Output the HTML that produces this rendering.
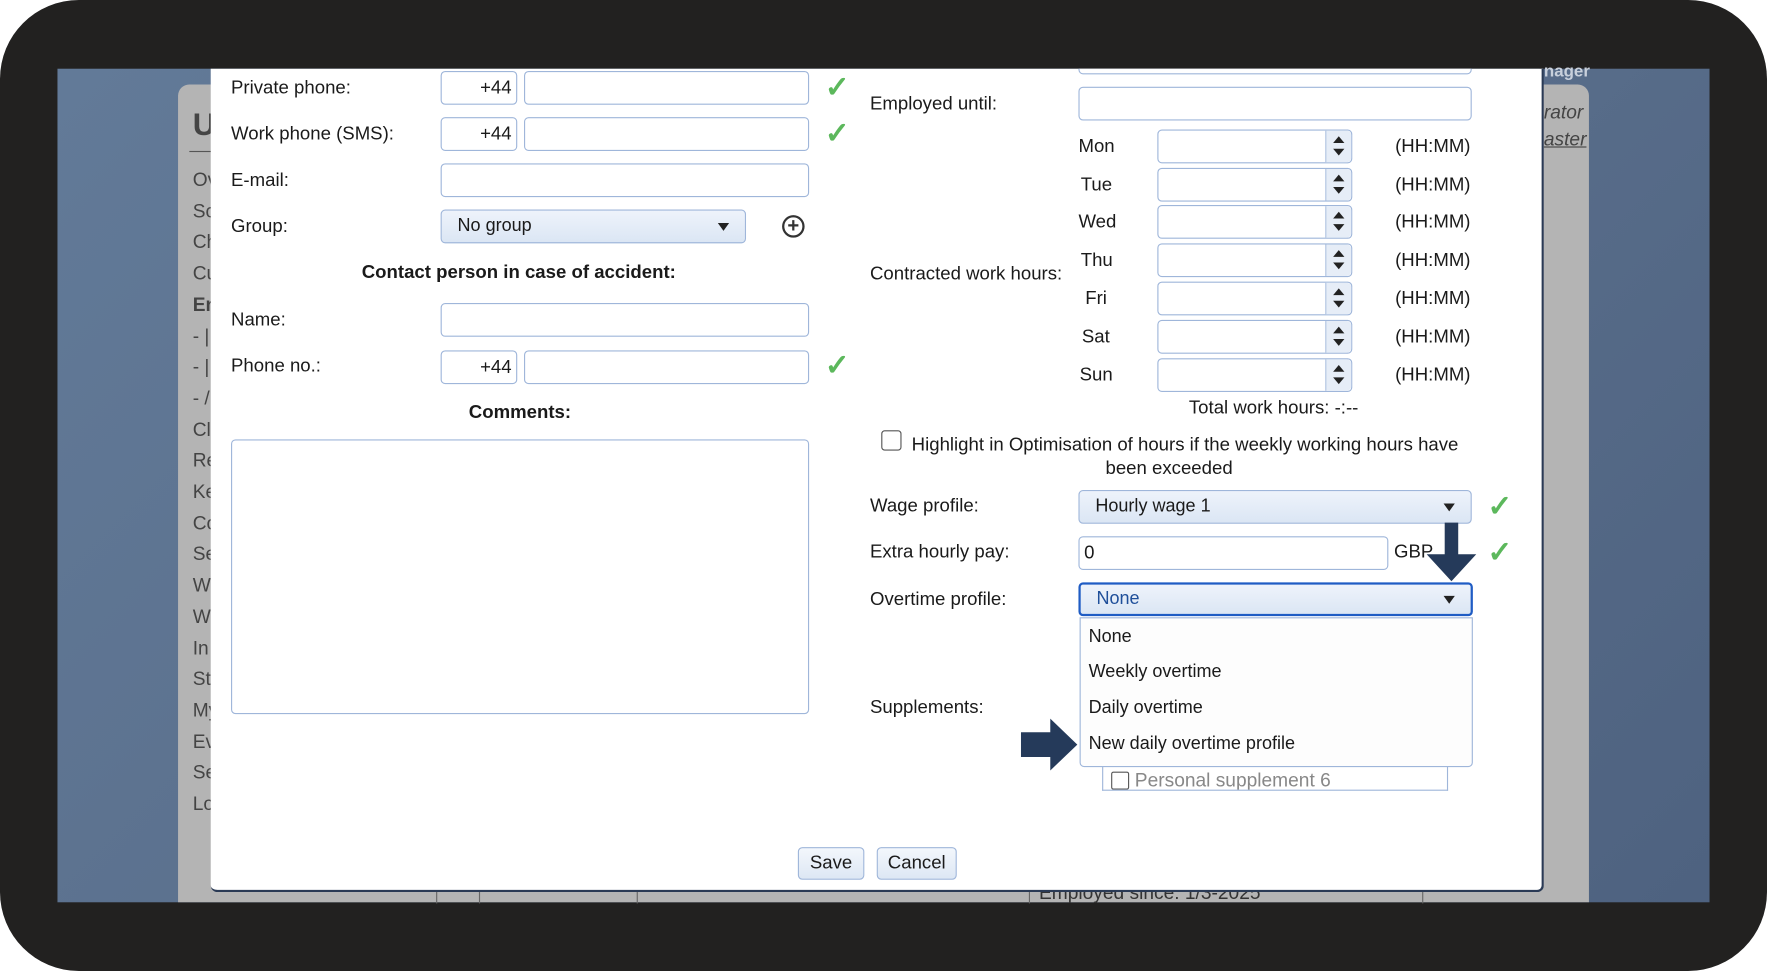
<!DOCTYPE html>
<html><head><meta charset="utf-8"><style>
*{box-sizing:border-box;margin:0;padding:0}
html,body{width:1767px;height:971px;overflow:hidden;background:#fff}
#w{position:absolute;left:0;top:0;width:1568px;height:862px;transform:scale(1.12691,1.12645);transform-origin:0 0;font-family:"Liberation Sans",sans-serif;color:#1a1a1a}
.a{position:absolute;white-space:nowrap}
.frame{left:0;top:0;width:1568px;height:862px;background:#222120;border-radius:70px}
.screen{left:51px;top:61px;width:1466px;height:740px;background:linear-gradient(135deg,#627a98 0%,#5a6f8c 50%,#4e6280 100%);overflow:hidden}
.panel{left:158px;top:75px;width:1252px;height:726px;background:#b4b4b4;border-radius:10px 10px 0 0}
.side{font-size:17px;color:#444}
.modal{left:187px;top:61px;width:1183px;height:731px;background:#fff;border-bottom:2px solid #2a3a55;border-right:2px solid #2a3a55;border-radius:0 0 6px 6px}
.l{font-size:16.5px}
.in{position:absolute;height:30px;border:1px solid #9fb6da;border-radius:4px;background:#fff}
.cc{font-size:16.5px;text-align:right;padding-right:4px;line-height:28px}
.sel{position:absolute;height:30px;border:1px solid #9fb6da;border-radius:4px;background:linear-gradient(#eef3fb,#dbe6f4);font-size:16px;line-height:28px;padding-left:14px}
.tri{position:absolute;right:14px;top:11px;width:0;height:0;border-left:5px solid transparent;border-right:5px solid transparent;border-top:7px solid #222}
.chk{position:absolute;font-size:26px;color:#5cb85c;line-height:1;font-weight:bold}
.sp{position:absolute;right:0;top:0;width:23px;height:28px;border-left:1px solid #9fb6da;background:#e6edf7;border-radius:0 4px 4px 0}
.sp:before{content:"";position:absolute;left:6px;top:5px;border-left:5px solid transparent;border-right:5px solid transparent;border-bottom:6px solid #222}
.sp:after{content:"";position:absolute;left:6px;top:16px;border-left:5px solid transparent;border-right:5px solid transparent;border-top:6px solid #222}
.btn{position:absolute;height:29px;border:1px solid #9fb6da;border-radius:4px;background:linear-gradient(#f3f7fc,#dde7f4);font-size:16.5px;line-height:27px;text-align:center}
.dd{font-size:16px}
</style></head><body><div id="w">
<div class="a frame"></div>
<div class="a screen"></div>
<div class="a panel"></div>
<div class="a" style="left:1370px;top:55px;font-size:15px;font-weight:bold;color:#c8d0dc">nager</div>
<div class="a" style="left:1370px;top:90px;font-size:17px;font-style:italic;color:#444">rator</div>
<div class="a" style="left:1370px;top:114px;font-size:17px;font-style:italic;color:#444;text-decoration:underline">aster</div>
<div class="a" style="left:171px;top:95px;font-size:28px;font-weight:bold;color:#444">U</div>
<div class="a" style="left:168px;top:134px;width:20px;border-top:1px solid #555"></div>
<div class="a side" style="left:171px;top:146px;line-height:27.7px">Ov<br>Sc<br>Ch<br>Cu<br><b>En</b><br>- |<br>- |<br>- /<br>Cl<br>Re<br>Ke<br>Co<br>Se<br>W<br>W<br>In<br>St<br>My<br>Ev<br>Se<br>Lo</div>
<div class="a" style="left:922px;top:783px;font-size:17px;color:#333">Employed since: 1/3-2025</div>
<div class="a" style="left:387px;top:790px;width:1px;height:12px;background:#666"></div>
<div class="a" style="left:425px;top:790px;width:1px;height:12px;background:#666"></div>
<div class="a" style="left:565px;top:790px;width:1px;height:12px;background:#666"></div>
<div class="a" style="left:913px;top:790px;width:1px;height:12px;background:#666"></div>
<div class="a" style="left:1262px;top:790px;width:1px;height:12px;background:#666"></div>

<div class="a modal"></div>

<!-- left column -->
<div class="a l" style="left:205px;top:69px">Private phone:</div>
<div class="in cc" style="left:391px;top:63px;width:68px">+44</div>
<div class="in" style="left:465px;top:63px;width:253px"></div>
<div class="chk" style="left:732px;top:64px">✓</div>
<div class="a l" style="left:205px;top:110px">Work phone (SMS):</div>
<div class="in cc" style="left:391px;top:104px;width:68px">+44</div>
<div class="in" style="left:465px;top:104px;width:253px"></div>
<div class="chk" style="left:732px;top:105px">✓</div>
<div class="a l" style="left:205px;top:151px">E-mail:</div>
<div class="in" style="left:391px;top:145px;width:327px"></div>
<div class="a l" style="left:205px;top:192px">Group:</div>
<div class="sel" style="left:391px;top:186px;width:271px">No group<span class="tri"></span></div>
<div class="a" style="left:694px;top:191px;width:20px;height:20px;border:2px solid #333;border-radius:50%;font-size:18px;font-weight:bold;line-height:15px;text-align:center;color:#333">+</div>
<div class="a l" style="left:321px;top:233px;font-weight:bold">Contact person in case of accident:</div>
<div class="a l" style="left:205px;top:275px">Name:</div>
<div class="in" style="left:391px;top:269px;width:327px"></div>
<div class="a l" style="left:205px;top:316px">Phone no.:</div>
<div class="in cc" style="left:391px;top:311px;width:68px">+44</div>
<div class="in" style="left:465px;top:311px;width:253px"></div>
<div class="chk" style="left:732px;top:311px">✓</div>
<div class="a l" style="left:416px;top:357px;font-weight:bold">Comments:</div>
<div class="in" style="left:205px;top:390px;width:513px;height:244px"></div>

<!-- right column -->
<div class="a" style="left:955px;top:61px;width:354px;height:6px;overflow:hidden"><div class="in" style="left:2px;top:-25px;width:349px;height:30px"></div></div>
<div class="a l" style="left:772px;top:83px">Employed until:</div>
<div class="in" style="left:957px;top:77px;width:349px"></div>
<div class="a l" style="left:772px;top:234px">Contracted work hours:</div>

<div class="a l" style="left:957px;top:121px">Mon</div>
<div class="in" style="left:1027px;top:115px;width:173px"><span class="sp"></span></div>
<div class="a l" style="left:1238px;top:121px">(HH:MM)</div>
<div class="a l" style="left:959px;top:155px">Tue</div>
<div class="in" style="left:1027px;top:149px;width:173px"><span class="sp"></span></div>
<div class="a l" style="left:1238px;top:155px">(HH:MM)</div>
<div class="a l" style="left:957px;top:188px">Wed</div>
<div class="in" style="left:1027px;top:182px;width:173px"><span class="sp"></span></div>
<div class="a l" style="left:1238px;top:188px">(HH:MM)</div>
<div class="a l" style="left:959px;top:222px">Thu</div>
<div class="in" style="left:1027px;top:216px;width:173px"><span class="sp"></span></div>
<div class="a l" style="left:1238px;top:222px">(HH:MM)</div>
<div class="a l" style="left:963px;top:256px">Fri</div>
<div class="in" style="left:1027px;top:250px;width:173px"><span class="sp"></span></div>
<div class="a l" style="left:1238px;top:256px">(HH:MM)</div>
<div class="a l" style="left:960px;top:290px">Sat</div>
<div class="in" style="left:1027px;top:284px;width:173px"><span class="sp"></span></div>
<div class="a l" style="left:1238px;top:290px">(HH:MM)</div>
<div class="a l" style="left:958px;top:324px">Sun</div>
<div class="in" style="left:1027px;top:318px;width:173px"><span class="sp"></span></div>
<div class="a l" style="left:1238px;top:324px">(HH:MM)</div>
<div class="a l" style="left:1055px;top:353px">Total work hours: -:--</div>

<div class="a" style="left:782px;top:382px;width:18px;height:18px;border:1.5px solid #555;border-radius:3px"></div>
<div class="a l" style="left:809px;top:386px">Highlight in Optimisation of hours if the weekly working hours have</div>
<div class="a l" style="left:981px;top:407px">been exceeded</div>

<div class="a l" style="left:772px;top:440px">Wage profile:</div>
<div class="sel" style="left:957px;top:435px;width:349px">Hourly wage 1<span class="tri"></span></div>
<div class="chk" style="left:1320px;top:436px">✓</div>
<div class="a l" style="left:772px;top:481px">Extra hourly pay:</div>
<div class="in" style="left:957px;top:476px;width:275px;font-size:16.5px;line-height:28px;padding-left:4px">0</div>
<div class="a l" style="left:1237px;top:481px">GBP</div>
<div class="chk" style="left:1320px;top:477px">✓</div>
<div class="a l" style="left:772px;top:523px">Overtime profile:</div>
<div class="sel" style="left:957px;top:517px;width:350px;border:2px solid #1f5cc4;color:#1f4f9a;line-height:26px">None<span class="tri" style="top:10px"></span></div>
<div class="a l" style="left:772px;top:619px">Supplements:</div>

<div class="a" style="left:978px;top:680px;width:307px;height:22px;border:1px solid #9fb6da;border-top:none;overflow:hidden">
<div class="a" style="left:7px;top:5px;width:16px;height:16px;border:1.5px solid #555;border-radius:2px"></div>
<div class="a" style="left:28px;top:3px;font-size:17px;color:#888">Personal supplement 6</div>
</div>
<div class="a" style="left:958px;top:548px;width:349px;height:133px;background:#fdfdfd;border:1px solid #9fb6da;border-radius:0 0 4px 4px"></div>
<div class="a dd" style="left:966px;top:557px">None</div>
<div class="a dd" style="left:966px;top:588px">Weekly overtime</div>
<div class="a dd" style="left:966px;top:620px">Daily overtime</div>
<div class="a dd" style="left:966px;top:652px">New daily overtime profile</div>

<svg class="a" style="left:1260px;top:462px" width="60" height="56"><path d="M22 2H34V30H50L28 54L6 30H22Z" fill="#253a5a"/></svg>
<svg class="a" style="left:902px;top:636px" width="58" height="50"><path d="M4 14H30V2L54 25L30 48V36H4Z" fill="#253a5a"/></svg>

<div class="btn" style="left:708px;top:752px;width:59px">Save</div>
<div class="btn" style="left:778px;top:752px;width:71px">Cancel</div>
</div></body></html>
